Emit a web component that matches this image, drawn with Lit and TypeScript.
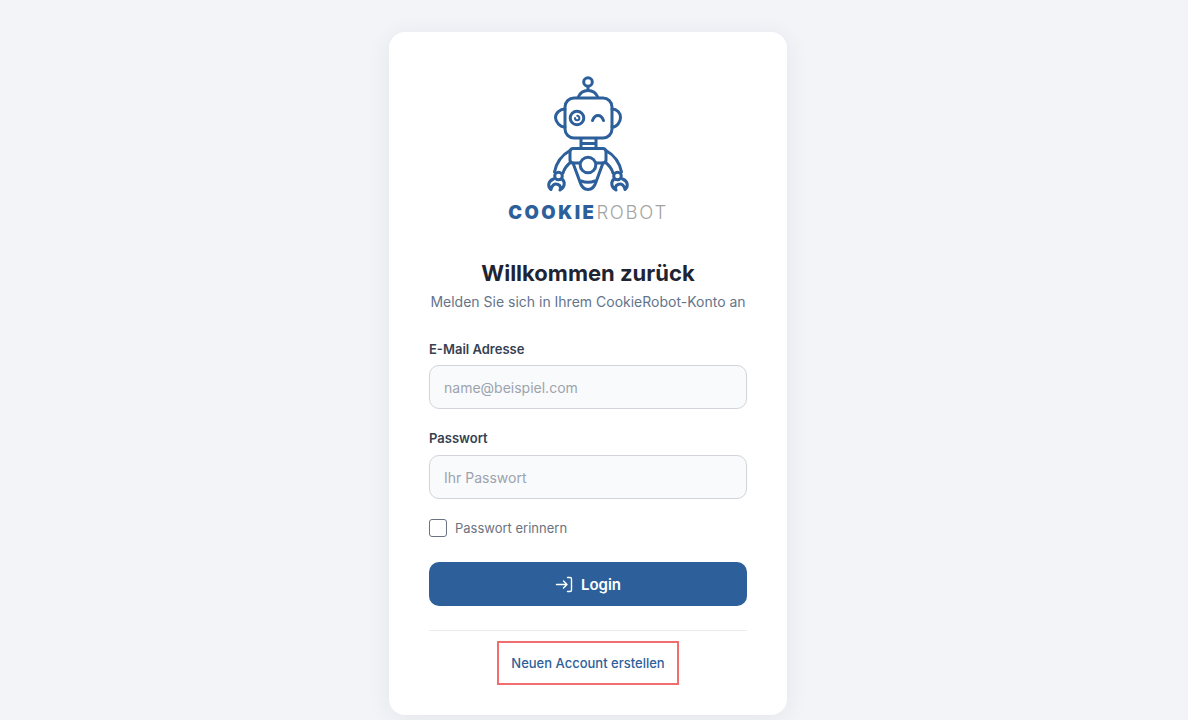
import { LitElement, html, css } from "lit";
import { customElement } from "lit/decorators.js";

@customElement("app-root")
export class AppRoot extends LitElement {
  static styles = css`
    :host {
      display: block;
      min-height: 720px;
      background: #f3f4f8;
      font-family: Inter, "Liberation Sans", sans-serif;
      box-sizing: border-box;
      padding: 32px 12px 0 0;
    }
    * { box-sizing: border-box; }
    .card {
      width: 398px;
      height: 683px;
      margin: 0 auto;
      background: #fff;
      border-radius: 16px;
      padding: 40px;
      box-shadow: 0 4px 24px rgba(30, 41, 59, 0.07);
      display: flex;
      flex-direction: column;
    }
    .logo {
      display: flex;
      flex-direction: column;
      align-items: center;
      height: 153px;
      flex: none;
    }
    .logo svg { display: block; flex: none; }
    .wordmark {
      font-size: 18.5px;
      line-height: 22px;
      letter-spacing: 2.5px;
      margin-top: -3px;
      white-space: nowrap;
      color: #2d5f9a;
      font-weight: 900;
    }
    .wordmark span { font-weight: 300; color: #a3a3a3; letter-spacing: 1.7px; }
    h1 {
      margin: 33px 0 0;
      font-size: 22px;
      line-height: 30px;
      font-weight: 700;
      color: #1e2433;
      text-align: center;
    }
    .sub {
      margin: 4px 0 0;
      font-size: 14px;
      line-height: 20px;
      color: #64748b;
      text-align: center;
      white-space: nowrap;
    }
    .field { display: flex; flex-direction: column; flex: none; }
    .field.first { margin-top: 28px; }
    .field.second { margin-top: 20px; }
    label.lbl {
      font-size: 13px;
      line-height: 18px;
      font-weight: 600;
      color: #374151;
      margin-bottom: 7px;
    }
    .second label.lbl { margin-bottom: 8px; }
    input.text {
      height: 44px;
      width: 100%;
      border: 1px solid #d1d5db;
      border-radius: 10px;
      background: #f9fafb;
      padding: 0 14px;
      font: 14px Inter, "Liberation Sans", sans-serif;
      color: #1e2433;
    }
    input.text::placeholder { color: #9ca3af; opacity: 1; }
    .remember {
      margin-top: 20px;
      display: flex;
      align-items: center;
      gap: 8px;
      font-size: 13px;
      line-height: 18px;
      color: #6b7280;
      flex: none;
    }
    .box {
      width: 18px;
      height: 18px;
      border: 1px solid #6b7280;
      border-radius: 3px;
      background: #fff;
      flex: none;
    }
    button {
      margin-top: 25px;
      height: 44px;
      width: 100%;
      flex: none;
      border: none;
      border-radius: 10px;
      background: #2d5f9a;
      color: #fff;
      font: 600 15px Inter, "Liberation Sans", sans-serif;
      display: flex;
      align-items: center;
      justify-content: center;
      gap: 8px;
    }
    .divider { margin-top: 24px; height: 1px; background: #e9ebef; flex: none; }
    .links { margin-top: 10px; display: flex; justify-content: center; flex: none; }
    .links a {
      height: 44px;
      width: 182px;
      border: 2px solid #f26d6d;
      display: flex;
      align-items: center;
      justify-content: center;
      font-size: 13px;
      font-weight: 500;
      color: #2d5f9a;
      text-decoration: none;
      white-space: nowrap;
    }
  `;

  render() {
    return html`
      <div class="card">
        <div class="logo">
          <svg width="116" height="132" viewBox="530 72 116 132" fill="none" stroke="#2d5f9a" stroke-width="3" stroke-linecap="round" stroke-linejoin="round">
            <circle cx="588" cy="82" r="4.300" />
            <path d="M588 86.500V90.500" />
            <path d="M578 97.500C580 92.500 584 90.500 588 90.500S596 92.500 598 97.500" />
            <rect x="565" y="98" width="47" height="40" rx="9" />
            <path d="M565 109C560 109 555.500 113 555.500 117.500S560 127 565 127" />
            <path d="M612 109C617 109 620.500 113 620.500 117.500S617 127 612 127" />
            <circle cx="577" cy="118" r="6.800" />
            <path d="M575 118a2.200 2.200 0 1 0 2.200-2.200" stroke-width="2" />
            <path d="M592.500 120.500C594 116.500 596.500 115.500 598 115.500S602 116.500 603.500 120.500" />
            <path d="M581 138.500V148M596 138.500V148M581 143.500H596" />
            <path d="M573 148.500H603A3 3 0 0 1 606 151.500V160C606 162 605 163 603 163H573C571 163 570 162 570 160V151.500A3 3 0 0 1 573 148.500Z" />
            <path d="M573 163L580 182C581.500 187 584 189.500 588 189.500S594.500 187 596 182L603 163" />
            <path d="M581 181C585 182.500 591 182.500 595 181" />
            <circle cx="588" cy="165" r="7.800" fill="#fff" />
            <path d="M570 150.500C562 155 556.500 162 554.500 172" />
            <path d="M571 162C567 165 564.500 168 563 173" />
            <path d="M606 150.500C614 155 619.500 162 621.500 172" />
            <path d="M605 162C609 165 611.500 168 613 173" />
            <circle cx="558.500" cy="176" r="3.800" />
            <circle cx="617.500" cy="176" r="3.800" />
            <path d="M553.500 179C548.500 181 547 186 551 189.500C551.500 185.500 554.500 183 558 184.500C560.500 185.500 561 187.500 560 190C565 187 565.500 182 562 179" />
            <path d="M622.500 179C627.500 181 629 186 625 189.500C624.500 185.500 621.500 183 618 184.500C615.500 185.500 615 187.500 616 190C611 187 610.500 182 614 179" />
          </svg>
          <div class="wordmark">COOKIE<span>ROBOT</span></div>
        </div>
        <h1>Willkommen zurück</h1>
        <p class="sub">Melden Sie sich in Ihrem CookieRobot-Konto an</p>
        <div class="field first">
          <label class="lbl">E-Mail Adresse</label>
          <input class="text" type="text" placeholder="name@beispiel.com" />
        </div>
        <div class="field second">
          <label class="lbl">Passwort</label>
          <input class="text" type="password" placeholder="Ihr Passwort" />
        </div>
        <div class="remember"><span class="box"></span><span>Passwort erinnern</span></div>
        <button type="button">
          <svg width="18" height="18" viewBox="0 0 18 18" fill="none" stroke="#fff" stroke-width="1.400" stroke-linecap="round" stroke-linejoin="round">
            <path d="M1.500 9.500H11.500M8.500 6L12 9.500L8.500 13" />
            <path d="M12.500 2.500H15A1.500 1.500 0 0 1 16.500 4V15A1.500 1.500 0 0 1 15 16.500H12.500" />
          </svg>
          Login
        </button>
        <div class="divider"></div>
        <div class="links"><a href="#">Neuen Account erstellen</a></div>
      </div>
    `;
  }
}
